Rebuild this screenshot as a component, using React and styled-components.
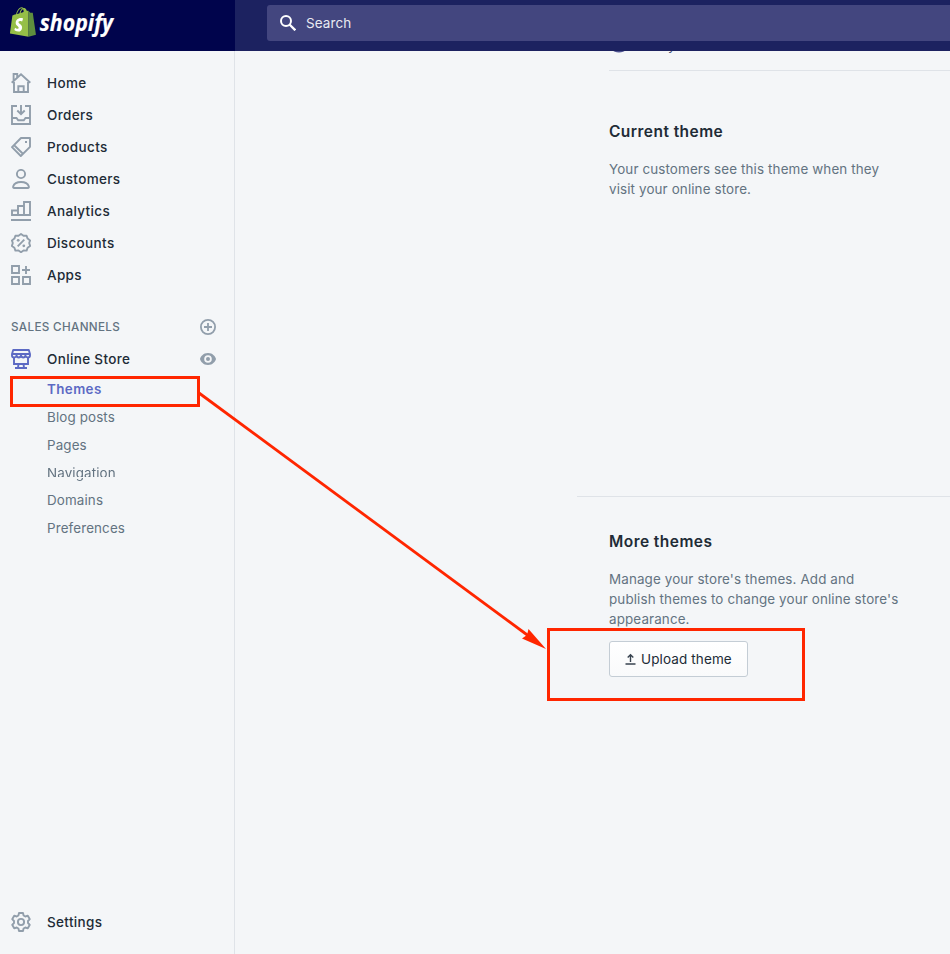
import React from "react";
import styled, { createGlobalStyle, css } from "styled-components";

const GlobalStyle = createGlobalStyle`
  * { box-sizing: border-box; }
  html, body { margin: 0; padding: 0; }
  body {
    background: #f4f6f8;
    color: #212b36;
    font-family: Inter, "Liberation Sans", sans-serif;
    font-size: 13.5px;
    overflow: hidden;
    -webkit-font-smoothing: antialiased;
  }
`;

const Page = styled.div`
  position: relative;
  display: grid;
  grid-template: 51px 1fr / 235px 1fr;
  width: 950px;
  height: 954px;
  overflow: hidden;
`;

const Brand = styled.div`
  display: flex;
  padding: 7px 0 0 10px;
  background: #00044c;
  z-index: 1;
`;

const TopBar = styled.header`
  padding: 5px 0 0 32px;
  background: #1c2260;
  z-index: 1;
`;

const SearchField = styled.div`
  display: flex;
  align-items: center;
  gap: 10px;
  height: 36px;
  padding-left: 13px;
  border-radius: 3px 0 0 3px;
  background: #43467f;
  color: #e9eaf2;
  letter-spacing: 0.1px;
`;

const Sidebar = styled.nav`
  display: flex;
  flex-direction: column;
  padding: 16px 0;
  border-right: 1px solid #dfe3e8;
`;

const NavRow = styled.a`
  display: flex;
  align-items: center;
  gap: 16px;
  height: 32px;
  padding: 0 18px 0 11px;
  font-weight: 500;
  letter-spacing: 0.35px;
  color: #212b36;

  & > span { flex: 1; }
`;

const SectionHeader = styled.div`
  display: flex;
  align-items: center;
  justify-content: space-between;
  height: 32px;
  margin-top: 20px;
  padding: 0 18px 0 11px;
  color: #637381;
  font-size: 11.7px;
  font-weight: 500;
  letter-spacing: 0.33px;

  & > span { margin-top: -1px; }
`;

const SubList = styled.div`
  display: flex;
  flex-direction: column;
  padding-left: 47px;
`;

const SubItem = styled.a`
  height: ${(p) => (p.$clipped ? 27 : 28)}px;
  line-height: 28px;
  font-size: 13.4px;
  color: ${(p) => (p.$active ? "#5c6ac4" : "#637381")};
  font-weight: ${(p) => (p.$active ? 600 : 400)};
  letter-spacing: ${(p) => (p.$active ? 0.4 : 0.13)}px;
  ${(p) =>
    p.$clipped &&
    css`
      mask-image: linear-gradient(#000 18px, transparent 18px, transparent 19px, #000 19px);
    `}
`;

const SidebarFooter = styled.div`
  margin-top: auto;
`;

const Main = styled.main`
  display: flex;
  flex-direction: column;
  min-width: 0;
`;

const StoreLink = styled.div`
  display: flex;
  align-items: center;
  flex: none;
  gap: 4px;
  height: 20px;
  margin: -16px 0 15px 374px;
  color: #4c5578;
  line-height: 20px;
`;

const Rule = styled.div`
  height: 1px;
  flex: none;
  margin-left: ${(p) => p.$inset}px;
  background: #dfe3e8;
`;

const Section = styled.section`
  display: flex;
  flex-direction: column;
  flex: none;
  align-items: flex-start;
  height: ${(p) => p.$height};
  padding: ${(p) => p.$top}px 0 0 374px;
`;

const Title = styled.h2`
  margin: 0;
  font-size: 15.5px;
  font-weight: 600;
  line-height: 24px;
  letter-spacing: 0.45px;
`;

const Description = styled.p`
  margin: 15px 0 0;
  color: #637381;
  font-size: 13.4px;
  line-height: 20px;
  letter-spacing: 0.13px;
  white-space: pre-line;
`;

const UploadButton = styled.button`
  display: flex;
  align-items: center;
  gap: 5px;
  width: 139px;
  height: 36px;
  margin-top: 12px;
  padding: 0 0 0 15px;
  border: 1px solid #c4cdd5;
  border-radius: 3px;
  background: linear-gradient(#fff, #f9fafb);
  color: #212b36;
  font: 400 13.5px Inter, sans-serif;
  letter-spacing: 0.12px;
  white-space: nowrap;
`;

const Highlight = styled.div`
  position: absolute;
  left: ${(p) => p.$x}px;
  top: ${(p) => p.$y}px;
  width: ${(p) => p.$w}px;
  height: ${(p) => p.$h}px;
  border: 3px solid #ff2600;
  pointer-events: none;
`;

const Arrow = styled.svg`
  position: absolute;
  left: 0;
  top: 0;
  pointer-events: none;
`;

const LogoSvg = styled.svg`
  flex: none;
  overflow: visible;
`;

const IconSvg = styled.svg`
  flex: none;
  fill: none;
  stroke: ${(p) => p.$color || "#919eab"};
  stroke-width: 1.9;
`;

const icons = {
  home: (
    <>
      <path d="M3 9v10h14V9M.7 9.800 10 1.300l9.300 8.500M2.600 8.200V1h3.600v3.200" />
      <path d="M7.300 19v-5.700h5.400V19" />
    </>
  ),
  orders: <path d="M6 1H1v18h18V1h-5M1 13h4.500l1.700 2.300h5.600l1.700-2.300H19M10 0v8.700M6.300 5.500 10 9.200l3.700-3.700" />,
  products: (
    <>
      <path strokeLinejoin="round" d="M1 10.200 10 1h9v8.800L9.800 19zM3.200 8.200l8.700 8.600" />
      <rect x="14" y="4" width="2" height="2" fill="#919eab" stroke="none" />
    </>
  ),
  customers: (
    <>
      <circle cx="10" cy="5" r="4.100" />
      <path strokeLinejoin="round" d="M3.200 19h13.600c1 0 1.300-.6 1-1.600-1-3-4-4.400-7.800-4.400s-6.800 1.400-7.800 4.400c-.3 1 0 1.600 1 1.600z" />
    </>
  ),
  analytics: <path d="M1 14V9.500h6V14zM7 14V5h6v9M13 14V1h6v13zM7 14h6M0 19h20" />,
  discounts: (
    <>
      <path strokeLinejoin="round" d="m10 1 2.500 1.800 3.100-.1 1 2.900 2.500 1.800L18.200 10l.9 2.900-2.500 1.800-1 2.900-3.100-.1L10 19.200l-2.500-1.700-3.100.1-1-2.900-2.500-1.800.9-2.900-.9-2.600 2.500-1.800 1-2.900 3.100.1z" />
      <path d="m6.700 13.300 6.600-6.600" />
      <g fill="#919eab" stroke="none"><circle cx="7.200" cy="7.300" r="1.400" /><circle cx="12.800" cy="12.800" r="1.400" /></g>
    </>
  ),
  apps: <path d="M1 1h7v7H1zM1 12h7v7H1zM12 12h7v7h-7zM15 1v8M11 5h8" />,
  store: (
    <>
      <path strokeLinejoin="round" d="M2.200 1h15.600L19 5v1.500c0 2.600-4.200 2.600-4.500 0-.4 2.600-4.100 2.600-4.500 0-.4 2.600-4.100 2.600-4.500 0-.3 2.600-4.500 2.600-4.500 0V5zM1.200 5h17.600" />
      <path d="M3 8.500V15h14V8.500M7.500 15 7 18.800M12.500 15l.5 3.800M4 19h12" />
    </>
  ),
  settings: (
    <>
      <path strokeLinejoin="round" d="M8 1h4l.6 2.500 1.700 1 2.500-.8 2 3.500L17 9v2l1.800 1.800-2 3.500-2.500-.8-1.700 1L12 19H8l-.6-2.500-1.700-1-2.500.8-2-3.500L3 11V9L1.200 7.200l2-3.500 2.500.8 1.700-1z" />
      <circle cx="10" cy="10" r="3.100" />
    </>
  ),
};

const Icon = ({ name, color }) => (
  <IconSvg width="20" height="20" viewBox="0 0 20 20" $color={color}>
    {icons[name]}
  </IconSvg>
);

const EyeIcon = ({ color = "#919eab", size = 16 }) => (
  <svg width={size} height={size} viewBox="0 0 16 16">
    <path fill={color} fillRule="evenodd" d="M8 2C3 2 .7 5.700 0 8c.7 2.300 3 6 8 6s7.300-3.700 8-6c-.7-2.300-3-6-8-6zm0 2.200a3.800 3.800 0 1 1 0 7.600 3.800 3.800 0 0 1 0-7.600z" />
    <circle cx="8" cy="8" r="2" fill={color} />
  </svg>
);

const Logo = () => (
  <LogoSvg width="108" height="44" viewBox="0 0 108 44">
    <g transform="translate(0 .2) scale(.238)">
      <path fill="#95bf47" fillRule="evenodd" d="M74.700 14.800s-1.400.4-3.700 1.100c-.4-1.300-1-2.800-1.800-4.400-2.600-5-6.500-7.700-11.100-7.700-.3 0-.6 0-1 .1-.1-.2-.3-.3-.4-.5-2-2.200-4.600-3.200-7.700-3.100-6 .2-12 4.500-16.800 12.200-3.400 5.400-6 12.200-6.700 17.500-6.900 2.100-11.700 3.600-11.800 3.700-3.500 1.100-3.600 1.200-4 4.500C9.400 40.700 0 111 0 111l78 13.500V14.600zM57.200 20.200c-4 1.200-8.400 2.600-12.700 3.900 1.200-4.700 3.600-9.400 6.400-12.500 1.100-1.100 2.600-2.400 4.300-3.200 1.700 3.600 2.100 8.500 2 11.800zM49.100 4.300c1.400 0 2.600.3 3.600.9-1.600.8-3.200 2.100-4.700 3.600-3.800 4.100-6.700 10.500-7.900 16.600-3.600 1.100-7.200 2.200-10.500 3.200C31.700 18.800 39.800 4.600 49.100 4.300z" />
      <path fill="#5e8e3e" d="m78 124.300 31.500-8.200S96 24.800 95.900 24.200c-.1-.6-.6-1-1.100-1s-9.300-.2-9.300-.2-5.400-5.200-7.500-7.200z" />
      <path fill="#fff" d="M58.100 39.900 54.400 51s-3.300-1.800-7.400-1.800c-6 0-6.200 3.700-6.200 4.700 0 5.200 13.500 7.200 13.500 19.300 0 9.500-6 15.700-14.200 15.700-9.800 0-14.800-6.100-14.800-6.100l2.600-8.700s5.200 4.400 9.500 4.400c2.800 0 4-2.200 4-3.900 0-6.800-11.100-7.100-11.100-18.200 0-9.400 6.700-18.400 20.300-18.400 4.900 0 7.500 1.900 7.500 1.900z" transform="translate(-10 3) scale(1.120)" />
    </g>
    <text x="29.700" y="23.700" fill="#fff" stroke="#fff" strokeWidth=".2" fontFamily="Open Sans, Noto Sans, sans-serif" fontStyle="italic" fontWeight="700" fontSize="23.500" textLength="73.500" lengthAdjust="spacingAndGlyphs">shopify</text>
  </LogoSvg>
);

const mainLinks = [
  ["home", "Home"],
  ["orders", "Orders"],
  ["products", "Products"],
  ["customers", "Customers"],
  ["analytics", "Analytics"],
  ["discounts", "Discounts"],
  ["apps", "Apps"],
];

export default function App() {
  return (
    <>
      <GlobalStyle />
      <Page>
        <Brand><Logo /></Brand>
        <TopBar>
          <SearchField>
            <svg width="16" height="16" viewBox="0 0 16 16" fill="none" stroke="#fff" strokeWidth="2">
              <circle cx="6" cy="6" r="5" />
              <path d="m9.500 9.500 5.800 5.800" strokeWidth="2.300" />
            </svg>
            <span>Search</span>
          </SearchField>
        </TopBar>
        <Sidebar>
          {mainLinks.map(([icon, label]) => (
            <NavRow key={icon}><Icon name={icon} /><span>{label}</span></NavRow>
          ))}
          <SectionHeader>
            <span>SALES CHANNELS</span>
            <svg width="16" height="16" viewBox="0 0 16 16" fill="none" stroke="#919eab" strokeWidth="1.800">
              <circle cx="8" cy="8" r="7.100" />
              <path d="M8 4v8M4 8h8" />
            </svg>
          </SectionHeader>
          <NavRow><Icon name="store" color="#5c6ac4" /><span>Online Store</span><EyeIcon /></NavRow>
          <SubList>
            <SubItem $active>Themes</SubItem>
            <SubItem>Blog posts</SubItem>
            <SubItem>Pages</SubItem>
            <SubItem $clipped>Navigation</SubItem>
            <SubItem>Domains</SubItem>
            <SubItem>Preferences</SubItem>
          </SubList>
          <SidebarFooter>
            <NavRow><Icon name="settings" /><span>Settings</span></NavRow>
          </SidebarFooter>
        </Sidebar>
        <Main>
          <StoreLink><EyeIcon color="#4c5190" size={20} />View your store</StoreLink>
          <Rule $inset={374} />
          <Section $height="425px" $top={49}>
            <Title>Current theme</Title>
            <Description>{"Your customers see this theme when they\nvisit your online store."}</Description>
          </Section>
          <Rule $inset={342} />
          <Section $height="auto" $top={33}>
            <Title>More themes</Title>
            <Description>{"Manage your store's themes. Add and\npublish themes to change your online store's\nappearance."}</Description>
            <UploadButton>
              <svg width="11" height="12" viewBox="0 0 11 12" fill="none" stroke="#38434f" strokeWidth="1.400">
                <path d="M5.500 9V2M2.700 4.500l2.800-2.800 2.800 2.800M.5 11h10" />
              </svg>
              Upload theme
            </UploadButton>
          </Section>
        </Main>
        <Highlight $x={10} $y={376} $w={190} $h={31} />
        <Highlight $x={547} $y={628} $w={258} $h={73} />
        <Arrow width="950" height="954" viewBox="0 0 950 954">
          <path d="M199 393 530 637" stroke="#ff2600" strokeWidth="2.800" />
          <path d="m546 649-24-10.500 5-3.500 1.500-6z" fill="#ff2600" />
        </Arrow>
      </Page>
    </>
  );
}
